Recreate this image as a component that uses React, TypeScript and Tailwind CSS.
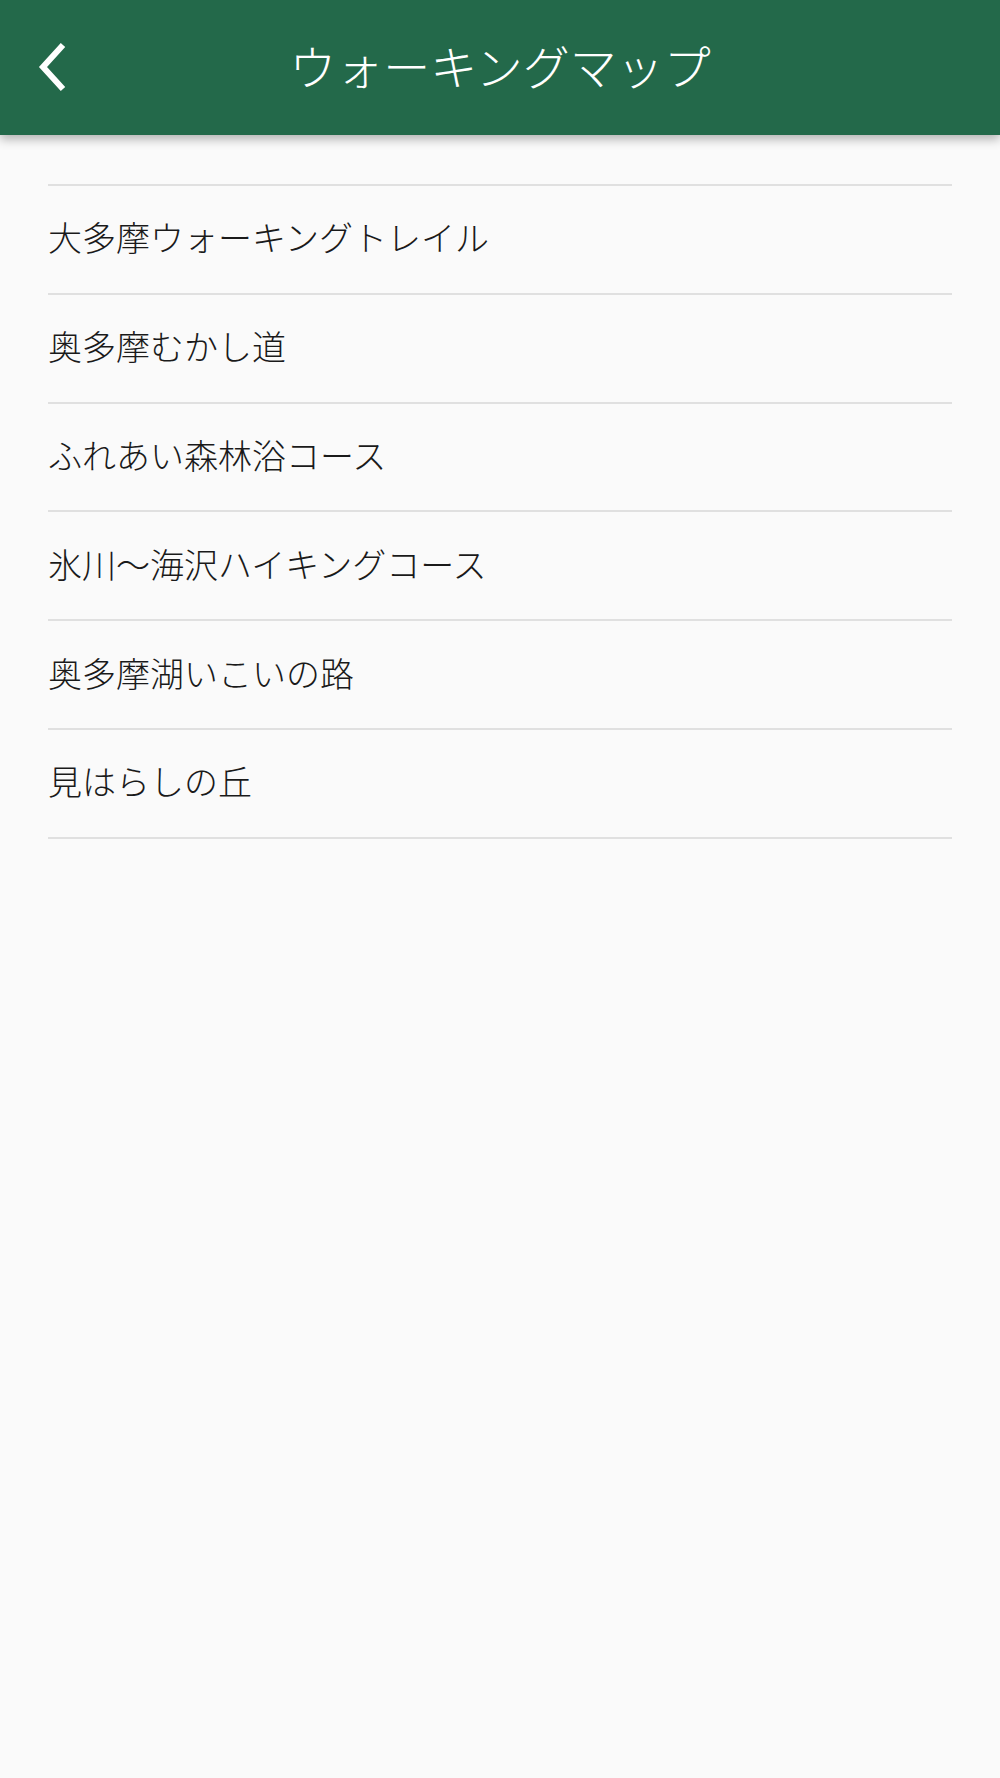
import React from 'react';

const courses = [
  '大多摩ウォーキングトレイル',
  '奥多摩むかし道',
  'ふれあい森林浴コース',
  '氷川～海沢ハイキングコース',
  '奥多摩湖いこいの路',
  '見はらしの丘',
];

const App: React.FC = () => {
  return (
    <div
      className="min-h-[1778px] w-full bg-[#fafafa]"
      style={{ fontFamily: '"Noto Sans CJK JP", "Noto Sans", sans-serif' }}
    >
      {/* Header */}
      <header className="relative z-10 flex h-[135px] items-center justify-center bg-[#23694a] pb-[6px] shadow-[0_4px_10px_rgba(0,0,0,0.3)]">
        <button className="absolute left-[30px] top-[38px] flex h-[58px] w-[44px] items-center justify-center" aria-label="back">
          <svg width="34" height="52" viewBox="0 0 34 52" fill="none">
            <polyline points="28,4 8,26 28,48" stroke="white" strokeWidth="6" strokeLinecap="butt" strokeLinejoin="miter" />
          </svg>
        </button>
        <h1 className="text-[47px] font-light leading-none tracking-normal text-white">ウォーキングマップ</h1>
      </header>

      {/* Course list */}
      <ul className="mx-[48px] mt-[49px] border-t-2 border-[#e0e0e0]">
        {courses.map((name) => (
          <li
            key={name}
            className="flex h-[108.8px] items-center border-b-2 border-[#e0e0e0] pb-[4px] text-[34px] font-light leading-none text-[#1a1a1a]"
          >
            {name}
          </li>
        ))}
      </ul>
    </div>
  );
};

export default App;
